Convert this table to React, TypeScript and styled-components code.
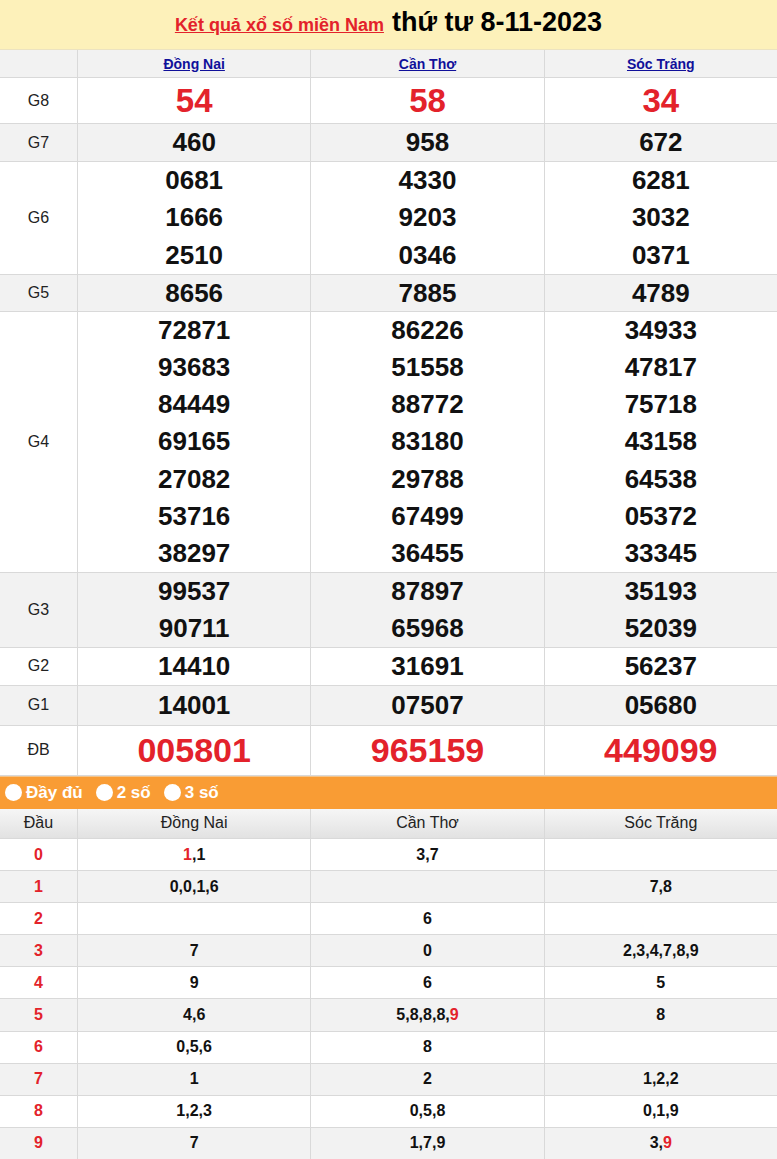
import React from "react";
import styled, { createGlobalStyle } from "styled-components";

const Global = createGlobalStyle`
  html, body { margin: 0; padding: 0; background: #fff; }
  body { font-family: "Liberation Sans", Arial, sans-serif; color: #000; }
`;

const RED = "#e3222b";
const LINE = "#d9d9d9";

const Page = styled.div`
  width: 777px;
`;

const TitleBar = styled.div`
  height: 50px;
  box-sizing: border-box;
  background: #fdf1ba;
  border-bottom: 1px solid #ece3c0;
  display: flex;
  align-items: center;
  justify-content: center;
  gap: 8px;
  padding-bottom: 4px;
`;

const TitleLink = styled.a`
  color: ${RED};
  font-size: 18px;
  font-weight: bold;
  text-decoration: underline;
  position: relative;
  top: 3px;
`;

const TitleDate = styled.span`
  font-size: 27px;
  font-weight: bold;
  color: #000;
`;

const Row = styled.div<{ $alt?: boolean; $h?: number }>`
  display: grid;
  grid-template-columns: 77px 1fr 1fr 1fr;
  background: ${(p) => (p.$alt ? "#f2f2f2" : "#fff")};
  border-bottom: 1px solid ${LINE};
  min-height: ${(p) => (p.$h ? `${p.$h}px` : "auto")};
  box-sizing: border-box;
`;

const Cell = styled.div`
  display: flex;
  flex-direction: column;
  align-items: center;
  justify-content: center;
  border-left: 1px solid ${LINE};
  &:first-child { border-left: none; }
`;

const ProvLink = styled.a`
  color: #10109a;
  font-size: 14px;
  font-weight: bold;
  text-decoration: underline;
`;

const Label = styled.span`
  font-size: 16px;
  color: #222;
`;

const Num = styled.div<{ $size?: number; $red?: boolean; $lh?: number }>`
  font-size: ${(p) => p.$size ?? 26}px;
  line-height: ${(p) => p.$lh ?? 37}px;
  font-weight: bold;
  color: ${(p) => (p.$red ? RED : "#111")};
`;

const OrangeBar = styled.div`
  height: 33px;
  background: #f99c34;
  display: flex;
  align-items: center;
  padding-left: 5px;
  gap: 13px;
  border-top: 1px solid #f3c48c;
  box-sizing: border-box;
`;

const Option = styled.label`
  display: flex;
  align-items: center;
  gap: 4px;
  color: #fff;
  font-size: 17px;
  font-weight: bold;
`;

const Dot = styled.span`
  width: 17px;
  height: 17px;
  border-radius: 50%;
  background: #fff;
  display: inline-block;
`;

const LotoHead = styled.div`
  display: grid;
  grid-template-columns: 77px 1fr 1fr 1fr;
  height: 30px;
  background: linear-gradient(#f6f6f6, #e2e2e2);
  border-bottom: 1px solid ${LINE};
  box-sizing: border-box;
`;

const HeadCell = styled(Cell)`
  font-size: 16px;
  color: #222;
`;

const LotoRow = styled.div<{ $alt?: boolean }>`
  display: grid;
  grid-template-columns: 77px 1fr 1fr 1fr;
  height: 32.1px;
  background: ${(p) => (p.$alt ? "#f2f2f2" : "#fff")};
  border-bottom: 1px solid ${LINE};
  box-sizing: border-box;
`;

const LotoCell = styled(Cell)`
  font-size: 16px;
  font-weight: bold;
  color: #111;
`;

const Red = styled.span`
  color: ${RED};
`;

const provinces = ["Đồng Nai", "Cần Thơ", "Sóc Trăng"];

type Prize = {
  label: string;
  values: string[][];
  size?: number;
  red?: boolean;
  lh?: number;
};

const prizes: Prize[] = [
  { label: "G8", values: [["54"], ["58"], ["34"]], size: 33, red: true, lh: 45 },
  { label: "G7", values: [["460"], ["958"], ["672"]], lh: 37 },
  {
    label: "G6",
    values: [
      ["0681", "1666", "2510"],
      ["4330", "9203", "0346"],
      ["6281", "3032", "0371"],
    ],
    lh: 37.33,
  },
  { label: "G5", values: [["8656"], ["7885"], ["4789"]], lh: 36 },
  {
    label: "G4",
    values: [
      ["72871", "93683", "84449", "69165", "27082", "53716", "38297"],
      ["86226", "51558", "88772", "83180", "29788", "67499", "36455"],
      ["34933", "47817", "75718", "43158", "64538", "05372", "33345"],
    ],
    lh: 37.14,
  },
  {
    label: "G3",
    values: [
      ["99537", "90711"],
      ["87897", "65968"],
      ["35193", "52039"],
    ],
    lh: 37,
  },
  { label: "G2", values: [["14410"], ["31691"], ["56237"]], lh: 37 },
  { label: "G1", values: [["14001"], ["07507"], ["05680"]], lh: 39 },
  { label: "ĐB", values: [["005801"], ["965159"], ["449099"]], size: 34, red: true, lh: 49 },
];

type Part = [string, boolean?];
const loto: Part[][][] = [
  [[["1", true], [",1"]], [["3,7"]], []],
  [[["0,0,1,6"]], [], [["7,8"]]],
  [[], [["6"]], []],
  [[["7"]], [["0"]], [["2,3,4,7,8,9"]]],
  [[["9"]], [["6"]], [["5"]]],
  [[["4,6"]], [["5,8,8,8,"], ["9", true]], [["8"]]],
  [[["0,5,6"]], [["8"]], []],
  [[["1"]], [["2"]], [["1,2,2"]]],
  [[["1,2,3"]], [["0,5,8"]], [["0,1,9"]]],
  [[["7"]], [["1,7,9"]], [["3,"], ["9", true]]],
];

export default function App() {
  return (
    <Page>
      <Global />
      <TitleBar>
        <TitleLink href="#">Kết quả xổ số miền Nam</TitleLink>
        <TitleDate>thứ tư 8-11-2023</TitleDate>
      </TitleBar>
      <Row $alt $h={28}>
        <Cell />
        {provinces.map((p) => (
          <Cell key={p}>
            <ProvLink href="#">{p}</ProvLink>
          </Cell>
        ))}
      </Row>
      {prizes.map((pr, i) => (
        <Row key={pr.label} $alt={i % 2 === 1}>
          <Cell>
            <Label>{pr.label}</Label>
          </Cell>
          {pr.values.map((col, j) => (
            <Cell key={j}>
              {col.map((v, k) => (
                <Num key={k} $size={pr.size} $red={pr.red} $lh={pr.lh}>
                  {v}
                </Num>
              ))}
            </Cell>
          ))}
        </Row>
      ))}
      <OrangeBar>
        <Option>
          <Dot />
          Đầy đủ
        </Option>
        <Option>
          <Dot />2 số
        </Option>
        <Option>
          <Dot />3 số
        </Option>
      </OrangeBar>
      <LotoHead>
        <HeadCell>Đầu</HeadCell>
        {provinces.map((p) => (
          <HeadCell key={p}>{p}</HeadCell>
        ))}
      </LotoHead>
      {loto.map((row, i) => (
        <LotoRow key={i} $alt={i % 2 === 1}>
          <LotoCell>
            <Red>{i}</Red>
          </LotoCell>
          {row.map((parts, j) => (
            <LotoCell key={j}>
              <span>
                {parts.map(([t, r], k) =>
                  r ? <Red key={k}>{t}</Red> : <span key={k}>{t}</span>
                )}
              </span>
            </LotoCell>
          ))}
        </LotoRow>
      ))}
    </Page>
  );
}
